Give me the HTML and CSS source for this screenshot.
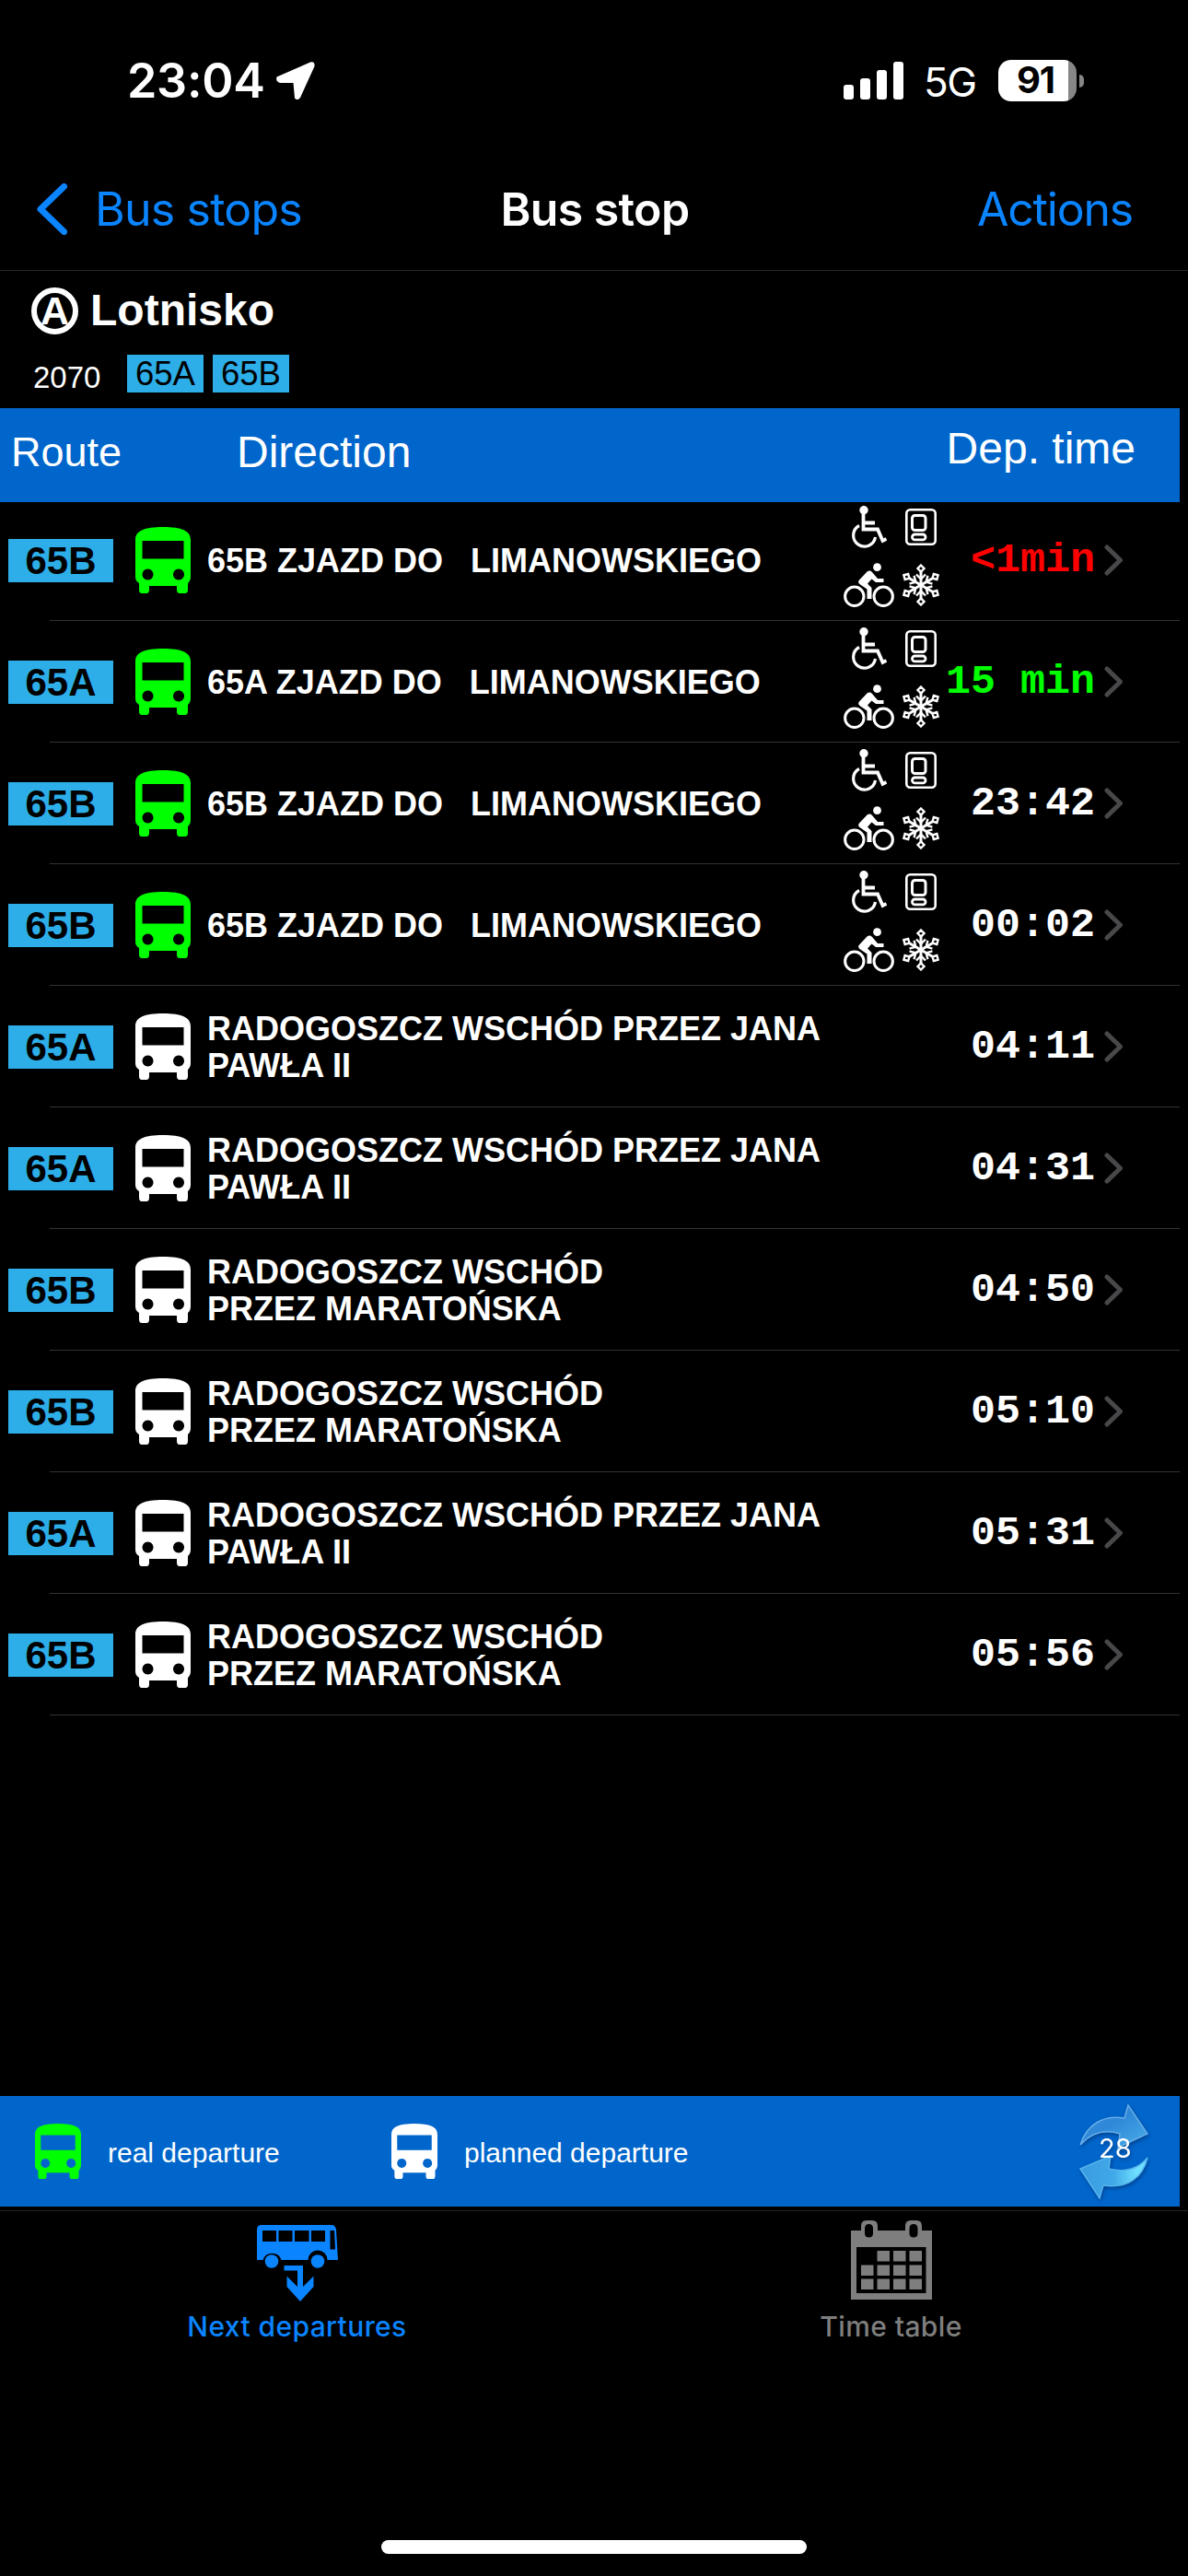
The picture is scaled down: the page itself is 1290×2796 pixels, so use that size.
FILE: index.html
```html
<!DOCTYPE html>
<html lang="en">
<head>
    <meta charset="UTF-8">
    <meta name="viewport" content="width=device-width, initial-scale=1.0">
    <title>Bus stop</title>
    <link rel="stylesheet" href="styles.css">
</head>
<body>
    <!-- shared icons -->
    <svg class="sprite" aria-hidden="true">
        <symbol id="bus" viewBox="0 0 60 72">
            <path fill="currentColor" fill-rule="evenodd" d="M0 14C0 4 10 0 30 0s30 4 30 14v40c0 3-1 5-3 7v7q0 4-3 4h-6q-3 0-3-4v-4H15v4q0 4-3 4H7q-3 0-3-4v-7c-3-2-4-4-4-7zM7.500 15v19.500h45V15zM13.500 45.500a6 6 0 1 0 .01 0zM47 45.500a6 6 0 1 0 .01 0z"/>
        </symbol>
        <symbol id="wheelchair" viewBox="0 0 38 46">
            <circle cx="13" cy="4.700" r="4.700" fill="currentColor"/>
            <path fill="none" stroke="currentColor" stroke-width="3.800" d="M12.500 8v17.500H28l5.500 12.500 4-2M13 18.500h12"/>
            <path fill="none" stroke="currentColor" stroke-width="3.200" d="M8 21.500A12 12 0 1 0 25.500 34"/>
        </symbol>
        <symbol id="machine" viewBox="0 0 34 40">
            <g fill="none" stroke="currentColor">
                <rect x="1.300" y="1.300" width="31.400" height="37.400" rx="4" stroke-width="2.600"/>
                <rect x="7.500" y="7.500" width="14.500" height="16" rx="3" stroke-width="3"/>
                <rect x="7.500" y="28" width="14.500" height="5.800" rx="2.900" stroke-width="2.800"/>
            </g>
        </symbol>
        <symbol id="bike" viewBox="0 0 55 48">
            <g fill="none" stroke="currentColor" stroke-width="3">
                <circle cx="11.800" cy="36.300" r="10.200"/>
                <circle cx="43.200" cy="36.300" r="10.200"/>
            </g>
            <circle cx="36.500" cy="4.700" r="4.400" fill="currentColor"/>
            <path fill="currentColor" d="M25.500 9.500q3-2 5.500.500l6 7h6.500v4H35l-4.500-3.500-4.500 5 4.500 4.500V39h-5V28.500l-8-5.500q-2.500-2-.500-4.500z"/>
        </symbol>
        <symbol id="snow" viewBox="-21 -23 42 46">
            <g id="snow-axis" fill="none" stroke="currentColor" stroke-width="2.400">
                <path stroke-width="3" d="M0-15V15"/>
                <path d="M0-21.500l3.500 3.500L0-14.500l-3.500-3.500zM0 21.500l3.500-3.500L0 14.500l-3.500 3.500zM-5-11.500L0-6.500l5-5M-5 11.500L0 6.500l5 5"/>
            </g>
            <use href="#snow-axis" transform="rotate(60)"/>
            <use href="#snow-axis" transform="rotate(-60)"/>
        </symbol>
        <symbol id="chevron" viewBox="0 0 20 34">
            <path fill="none" stroke="currentColor" stroke-width="5" stroke-linecap="round" stroke-linejoin="round" d="M3 3L17.500 17 3 31"/>
        </symbol>
    </svg>

    <header class="status-bar">
        <div class="clock">23:04
            <svg class="location" viewBox="0 0 42 41"><path fill="#fff" d="M37 .500Q42-1 41.500 5L26 39q-3 4-6 .500L18.500 23H4q-5-2-3.500-6.500z"/></svg>
        </div>
        <div class="signal"><i></i><i></i><i></i><i></i></div>
        <span class="network">5G</span>
        <div class="battery"><span>91</span></div>
        <i class="battery-tip"></i>
    </header>

    <nav class="nav-bar">
        <a class="back">
            <svg viewBox="0 0 33 56"><path fill="none" stroke="currentColor" stroke-width="7" stroke-linecap="round" stroke-linejoin="round" d="M29.500 3.500L4 28l25.500 24.500"/></svg>
            Bus stops
        </a>
        <h1>Bus stop</h1>
        <a class="actions">Actions</a>
    </nav>

    <section class="stop">
        <div class="stop-name"><span class="zone">A</span><h2>Lotnisko</h2></div>
        <div class="stop-info"><span class="stop-id">2070</span><span class="line">65A</span><span class="line">65B</span></div>
    </section>

    <div class="table-head">
        <span class="head-route">Route</span>
        <span class="head-direction">Direction</span>
        <span class="head-time">Dep. time</span>
    </div>

    <main class="departures" id="departures"></main>

    <footer>
        <div class="legend">
            <svg class="legend-bus real"><use href="#bus"/></svg>
            <span class="legend-real">real departure</span>
            <svg class="legend-bus"><use href="#bus"/></svg>
            <span class="legend-planned">planned departure</span>
            <div class="refresh">
                <svg viewBox="0 0 80 108">
                    <defs>
                        <linearGradient id="top-arrow" x1="0" y1="0" x2="1" y2="1">
                            <stop offset="0" stop-color="#3d8ddb"/>
                            <stop offset="0.450" stop-color="#2f88d8"/>
                            <stop offset="1" stop-color="#4aaee8"/>
                        </linearGradient>
                        <linearGradient id="low-arrow" x1="0" y1="0" x2="1" y2="0">
                            <stop offset="0" stop-color="#3b9be0"/>
                            <stop offset="0.500" stop-color="#40a9e8"/>
                            <stop offset="0.850" stop-color="#70e0ff"/>
                        </linearGradient>
                    </defs>
                    <path fill="url(#top-arrow)" stroke="#65aee8" stroke-width="1.500" d="M2 45C9 23 27 12 50 16L54 2l21 31-32 15 2-15C29 28 14 32 2 45z"/>
                    <path fill="url(#low-arrow)" stroke="#55b5ee" stroke-width="1.500" d="M75 59C70 80 54 93 27 89l-4 14L2 71l33-14-2 14c16 4 31 1 42-12z"/>
                </svg>
                <span>28</span>
            </div>
        </div>

        <div class="tab-bar">
            <a class="tab active">
                <svg viewBox="0 0 88 84">
                    <path fill="currentColor" fill-rule="evenodd" d="M5 0h76q4 0 5 5l2 33H76.500a10.500 10.500 0 0 0-21 0h-29a10.500 10.500 0 0 0-20 0H0V5q0-5 5-5zM6 6v12h15V6zM23.500 6v12h15V6zM41 6v12h15.500V6zM59 6v12h15V6zM79.500 6v20.500h5.500L84 6z"/>
                    <circle cx="16" cy="39.500" r="7.300" fill="currentColor"/>
                    <circle cx="66" cy="39.500" r="7.300" fill="currentColor"/>
                    <path fill="currentColor" d="M29.500 44H50v23l11.500-11.500V67L47 83 32.500 67V55.500L44 67V49.500H29.500z"/>
                </svg>
                <span>Next departures</span>
            </a>
            <a class="tab">
                <svg viewBox="0 0 88 86">
                    <path fill="currentColor" fill-rule="evenodd" d="M0 11h11V6q0-6 6-6h6q6 0 6 6v5h30V6q0-6 6-6h6q6 0 6 6v5h11v75H0zM15 9v5q0 4.500 4.500 4.500T24 14V9q0-5-4.500-5T15 9zM63.500 9v5q0 4.500 4.500 4.500t4.500-4.500V9q0-5-4.500-5t-4.500 5zM6 29v50h75.500V29z"/>
                    <path fill="currentColor" d="M28.500 33H42v11.500H28.500zM46 33h13.500v11.500H46zM63.500 33H77v11.500H63.500zM11 48.500h13.500V60H11zM28.500 48.500H42V60H28.500zM46 48.500h13.500V60H46zM63.500 48.500H77V60H63.500zM11 63.500h13.500V75H11zM28.500 63.500H42V75H28.500zM46 63.500h13.500V75H46zM63.500 63.500H77V75H63.500z"/>
                </svg>
                <span>Time table</span>
            </a>
        </div>
        <div class="home-indicator"></div>
    </footer>

    <script src="script.js"></script>
</body>
</html>
```

FILE: styles.css
```css
* {
    box-sizing: border-box;
}
body {
    margin: 0;
    width: 1290px;
    height: 2796px;
    overflow: hidden;
    display: flex;
    flex-direction: column;
    background: #000;
    color: #fff;
    font-family: "Liberation Sans", Arial, sans-serif;
}
h1, h2 {
    margin: 0;
}
svg {
    display: block;
}
.sprite {
    width: 0;
    height: 0;
    position: absolute;
}

.status-bar {
    display: flex;
    align-items: center;
    height: 175px;
    padding-left: 138px;
    font-family: Inter, sans-serif;
}
.clock {
    display: flex;
    align-items: center;
    gap: 12px;
    width: 778px;
    font-size: 52px;
    font-weight: 600;
    letter-spacing: -0.3px;
}
.location {
    width: 42px;
    height: 41px;
}
.signal {
    display: flex;
    align-items: flex-end;
    gap: 7px;
    width: 87px;
    height: 41px;
}
.signal i {
    width: 11px;
    height: 16px;
    border-radius: 3px;
    background: #fff;
}
.signal i:nth-child(2) {
    height: 23px;
}
.signal i:nth-child(3) {
    height: 32px;
}
.signal i:nth-child(4) {
    height: 41px;
}
.network {
    width: 81px;
    margin-top: 3px;
    font-size: 44px;
    letter-spacing: -1.5px;
}
.battery {
    width: 85px;
    height: 45px;
    padding-right: 4px;
    line-height: 44px;
    border-radius: 14px;
    background: linear-gradient(to right, #fff 76px, #868686 76px);
    color: #000;
    text-align: center;
    font-size: 40px;
    font-weight: 700;
    letter-spacing: -1px;
}
.battery-tip {
    width: 5px;
    height: 14px;
    margin-left: 3px;
    border-radius: 0 5px 5px 0;
    background: #868686;
}

.nav-bar {
    display: grid;
    grid-template-columns: 1fr auto 1fr;
    align-items: center;
    height: 119px;
    padding: 0 38px 14px 40px;
    border-bottom: 1px solid #262626;
    font-family: Inter, sans-serif;
    font-size: 50px;
    letter-spacing: -0.8px;
}
.nav-bar h1 {
    font-size: 50px;
    font-weight: 600;
    letter-spacing: -0.6px;
}
.back {
    display: flex;
    align-items: center;
    gap: 30px;
    color: #0a84ff;
}
.back svg {
    width: 33px;
    height: 56px;
}
.actions {
    margin-right: 22px;
    color: #0a84ff;
    text-align: right;
    letter-spacing: -1.2px;
}

.stop {
    height: 149px;
    padding: 18px 34px 0;
}
.stop-name {
    display: flex;
    gap: 13px;
}
.stop-name h2 {
    margin-top: -1px;
    font-size: 48px;
    line-height: 51px;
}
.zone {
    width: 51px;
    height: 51px;
    border: 6px solid #fff;
    border-radius: 50%;
    text-align: center;
    font-size: 43px;
    font-weight: 700;
    line-height: 38px;
}
.stop-info {
    display: flex;
    margin-top: 22px;
    padding-left: 2px;
    line-height: 42px;
}
.stop-id {
    width: 102px;
    padding-top: 4px;
    font-size: 33px;
}
.line {
    height: 41px;
    margin-right: 10px;
    padding: 0 9px;
    background: #2daee8;
    color: #000;
    font-size: 36.5px;
}

.table-head {
    display: flex;
    width: 1281px;
    height: 102px;
    background: #0066cc;
}
.head-route {
    width: 245px;
    padding: 22px 0 0 12px;
    font-size: 45px;
}
.head-direction {
    flex: 1;
    padding: 20px 0 0 12px;
    font-size: 48px;
}
.head-time {
    padding: 16px 48px 0 0;
    font-size: 48px;
}

.departures {
    width: 1281px;
    margin-top: -3px;
}
.departure {
    display: flex;
    align-items: center;
    height: 132px;
    padding-left: 9px;
    background: linear-gradient(#333, #333) 54px 131px / 100% 1px no-repeat;
}
.badge {
    width: 114px;
    height: 47px;
    margin-top: 1px;
    background: #2daee8;
    color: #000;
    text-align: center;
    font-size: 42px;
    font-weight: 700;
    line-height: 47px;
}
.bus {
    width: 60px;
    height: 72px;
    margin: 0 18px 0 24px;
}
.real {
    color: #0f0;
}
.direction {
    width: 690px;
    padding-top: 2px;
    white-space: pre;
    font-size: 36px;
    font-weight: 700;
    line-height: 40px;
}
.amenities {
    position: relative;
    width: 0;
    height: 132px;
}
.amenities div {
    display: grid;
    grid-template-columns: 55px 42px;
    grid-template-rows: 46px 48px;
    gap: 16px 8px;
    place-items: center;
    position: absolute;
    top: 7px;
    left: 1px;
}
.wheelchair {
    width: 38px;
    height: 46px;
}
.machine {
    width: 34px;
    height: 40px;
}
.bike {
    width: 55px;
    height: 48px;
}
.snow {
    width: 42px;
    height: 46px;
}
.time {
    width: 274px;
    text-align: right;
    font-family: "Liberation Mono", "Courier New", monospace;
    font-size: 45px;
    font-weight: 700;
}
.now {
    color: #f00;
}
.soon {
    color: #0f0;
}
.chevron {
    width: 20px;
    height: 34px;
    margin-left: 10px;
    color: #48484a;
}

footer {
    margin-top: auto;
}
.legend {
    display: flex;
    align-items: center;
    width: 1281px;
    height: 120px;
    padding-left: 38px;
    background: #0066cc;
    font-size: 30px;
}
.legend-bus {
    width: 50px;
    height: 60px;
    margin-right: 29px;
}
.legend-real {
    width: 308px;
    padding-top: 4px;
}
.legend-planned {
    padding-top: 4px;
}
.refresh {
    position: relative;
    width: 80px;
    height: 108px;
    margin: 4px 30px 0 auto;
    filter: drop-shadow(1px 2px 2px rgba(0, 40, 100, 0.6));
}
.refresh svg {
    width: 80px;
    height: 108px;
}
.refresh span {
    position: absolute;
    top: 31px;
    left: 22px;
    font-family: Inter, sans-serif;
    font-size: 29px;
}

.tab-bar {
    display: flex;
    height: 358px;
    margin-top: 4px;
    border-top: 1px solid #262626;
}
.tab {
    display: flex;
    flex-direction: column;
    align-items: center;
    width: 50%;
    padding-top: 10px;
    color: #7e7e7e;
    font-family: Inter, sans-serif;
    font-size: 30px;
    font-weight: 500;
    letter-spacing: 0.4px;
}
.tab svg {
    width: 88px;
    height: 86px;
}
.tab span {
    margin-top: 11px;
}
.active {
    color: #0a84ff;
}
.active svg {
    height: 84px;
    margin-top: 5px;
}
.active span {
    margin-top: 8px;
}
.home-indicator {
    width: 462px;
    height: 15px;
    margin: 0 auto 24px;
    border-radius: 8px;
    background: #fff;
}
```

FILE: script.js
```js
const viaJana = 'RADOGOSZCZ WSCHÓD PRZEZ JANA\nPAWŁA II';
const viaMaratonska = 'RADOGOSZCZ WSCHÓD\nPRZEZ MARATOŃSKA';

const departures = [
    { route: '65B', direction: '65B ZJAZD DO   LIMANOWSKIEGO', time: '<1min', real: true, state: 'now' },
    { route: '65A', direction: '65A ZJAZD DO   LIMANOWSKIEGO', time: '15 min', real: true, state: 'soon' },
    { route: '65B', direction: '65B ZJAZD DO   LIMANOWSKIEGO', time: '23:42', real: true },
    { route: '65B', direction: '65B ZJAZD DO   LIMANOWSKIEGO', time: '00:02', real: true },
    { route: '65A', direction: viaJana, time: '04:11' },
    { route: '65A', direction: viaJana, time: '04:31' },
    { route: '65B', direction: viaMaratonska, time: '04:50' },
    { route: '65B', direction: viaMaratonska, time: '05:10' },
    { route: '65A', direction: viaJana, time: '05:31' },
    { route: '65B', direction: viaMaratonska, time: '05:56' }
];

function icon(name, extra = '') {
    return `<svg class="${name} ${extra}"><use href="#${name}"/></svg>`;
}

const list = document.getElementById('departures');

departures.forEach(d => {
    const row = document.createElement('div');
    row.className = 'departure';
    const amenities = d.real ? icon('wheelchair') + icon('machine') + icon('bike') + icon('snow') : '';

    row.innerHTML = `
        <span class="badge">${d.route}</span>
        ${icon('bus', d.real ? 'real' : '')}
        <span class="direction">${d.direction}</span>
        <div class="amenities"><div>${amenities}</div></div>
        <span class="time ${d.state || ''}">${d.time.replace('<', '&lt;')}</span>
        ${icon('chevron')}
    `;
    list.appendChild(row);
});
```
